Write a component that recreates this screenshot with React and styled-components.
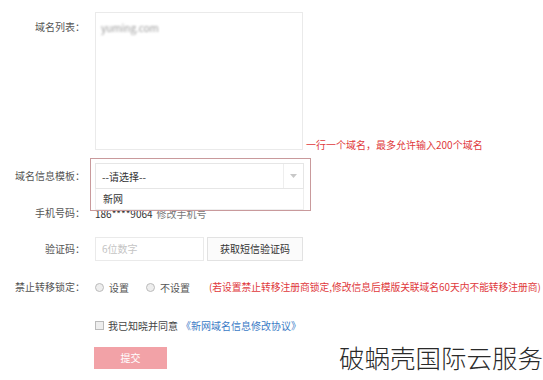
import React from 'react'
import styled, { createGlobalStyle } from 'styled-components'

const GlobalStyle = createGlobalStyle`
    html, body {
        margin: 0;
        padding: 0;
        background: #fff;
    }
    body {
        font-family: "Noto Sans CJK SC", "Noto Sans", sans-serif;
        font-size: 10px;
        color: #444;
    }
`;

const Page = styled.div`
    position: relative;
    width: 543px;
    height: 380px;
    overflow: hidden;
    padding-top: 12px;
    box-sizing: border-box;
`;

const Row = styled.div`
    display: flex;
    align-items: ${({ align }) => align || 'center'};
    margin-top: ${({ gap }) => gap || 0}px;
    min-height: 20px;
    white-space: nowrap;
`;

const Label = styled.div`
    width: 85px;
    text-align: right;
    line-height: 14px;
    margin-right: 10px;
    margin-top: ${({ top }) => top || 0}px;
    color: #555;
    flex-shrink: 0;
    align-self: ${({ self }) => self || 'auto'};
`;

const AreaBox = styled.div`
    width: 208px;
    height: 138px;
    box-sizing: border-box;
    border: 1px solid #eaeaea;
    padding: 7px 5px;
    flex-shrink: 0;
`;

const Blurred = styled.span`
    color: #9a9a9a;
    filter: blur(1.2px);
    display: inline-block;
`;

const Hint = styled.div`
    color: #e0393c;
    line-height: 14px;
    margin-left: 3px;
    margin-bottom: -2px;
`;

const SelectWrap = styled.div`
    position: relative;
    width: 209px;
`;

const SelectField = styled.div`
    display: flex;
    align-items: center;
    height: 26px;
    box-sizing: border-box;
    border: 1px solid #e6e6e6;
    color: #333;
`;

const SelectText = styled.div`
    flex: 1;
    padding-left: 6px;
`;

const SelectArrow = styled.div`
    width: 19px;
    height: 100%;
    border-left: 1px solid #eee;
    display: flex;
    align-items: center;
    justify-content: center;
`;

const Dropdown = styled.div`
    position: absolute;
    top: 26px;
    left: 0;
    right: 0;
    height: 20px;
    background: #fff;
    border: 1px solid #eee;
    border-top: none;
    padding-left: 7px;
    line-height: 20px;
    color: #333;
    z-index: 2;
`;

const Mark = styled.div`
    position: absolute;
    top: -5px;
    left: -5px;
    width: 221px;
    height: 53px;
    border: 1px solid #c99a9c;
    box-sizing: border-box;
    z-index: 3;
    pointer-events: none;
`;

const Value = styled.span`
    color: #333;
    margin-right: 4px;
`;

const Muted = styled.span`
    color: #777;
`;

const Input = styled.div`
    width: 109px;
    height: 24px;
    box-sizing: border-box;
    border: 1px solid #eaeaea;
    padding-left: 6px;
    line-height: 22px;
    color: #c4c4c4;
`;

const SmsButton = styled.div`
    width: 96px;
    height: 24px;
    box-sizing: border-box;
    margin-left: 3px;
    border: 1px solid #e2e2e2;
    background: #fbfbfb;
    text-align: center;
    line-height: 22px;
    color: #333;
`;

const Radio = styled.span`
    width: 7px;
    height: 7px;
    border-radius: 50%;
    border: 1px solid #bbb;
    background: #eee;
    margin-right: 5px;
    flex-shrink: 0;
`;

const Option = styled.label`
    display: flex;
    align-items: center;
    flex-shrink: 0;
    margin-right: ${({ space }) => space}px;
    color: #555;
`;

const Warn = styled.span`
    color: #e0393c;
    font-size: 9.8px;
    letter-spacing: -0.05px;
`;

const Check = styled.span`
    width: 7px;
    height: 7px;
    border: 1px solid #bbb;
    background: #eee;
    margin-right: 4px;
    flex-shrink: 0;
`;

const Link = styled.span`
    color: #3b7bc6;
    margin-left: 3px;
`;

const Submit = styled.div`
    width: 73px;
    height: 22px;
    margin-left: 94px;
    background: #f2a2a7;
    color: #fff;
    text-align: center;
    line-height: 22px;
`;

const Watermark = styled.div`
    position: absolute;
    right: 0;
    bottom: 5px;
    font-size: 25.5px;
    font-weight: 300;
    color: #2a2a2a;
    white-space: nowrap;
`;

export default function App() {
    return (
        <Page>
            <GlobalStyle />
            <Row align="flex-end">
                <Label top={8} self="flex-start">域名列表：</Label>
                <AreaBox>
                    <Blurred>yuming.com</Blurred>
                </AreaBox>
                <Hint>一行一个域名，最多允许输入200个域名</Hint>
            </Row>
            <Row gap={13}>
                <Label>域名信息模板：</Label>
                <SelectWrap>
                    <SelectField>
                        <SelectText>--请选择--</SelectText>
                        <SelectArrow>
                            <svg width="7" height="4" viewBox="0 0 7 4">
                                <path d="M0 0 L7 0 L3.5 4 Z" fill="#c8c8c8" />
                            </svg>
                        </SelectArrow>
                    </SelectField>
                    <Dropdown>新网</Dropdown>
                    <Mark />
                </SelectWrap>
            </Row>
            <Row gap={14}>
                <Label>手机号码：</Label>
                <Value>186****9064</Value>
                <Muted>修改手机号</Muted>
            </Row>
            <Row gap={14}>
                <Label>验证码：</Label>
                <Input>6位数字</Input>
                <SmsButton>获取短信验证码</SmsButton>
            </Row>
            <Row gap={16}>
                <Label>禁止转移锁定：</Label>
                <Option space={17}><Radio />设置</Option>
                <Option space={19}><Radio />不设置</Option>
                <Warn>(若设置禁止转移注册商锁定,修改信息后模版关联域名60天内不能转移注册商)</Warn>
            </Row>
            <Row gap={18}>
                <Label />
                <Check />
                <span>我已知晓并同意</span>
                <Link>《新网域名信息修改协议》</Link>
            </Row>
            <Row gap={12}>
                <Submit>提交</Submit>
            </Row>
            <Watermark>破蜗壳国际云服务</Watermark>
        </Page>
    )
}
